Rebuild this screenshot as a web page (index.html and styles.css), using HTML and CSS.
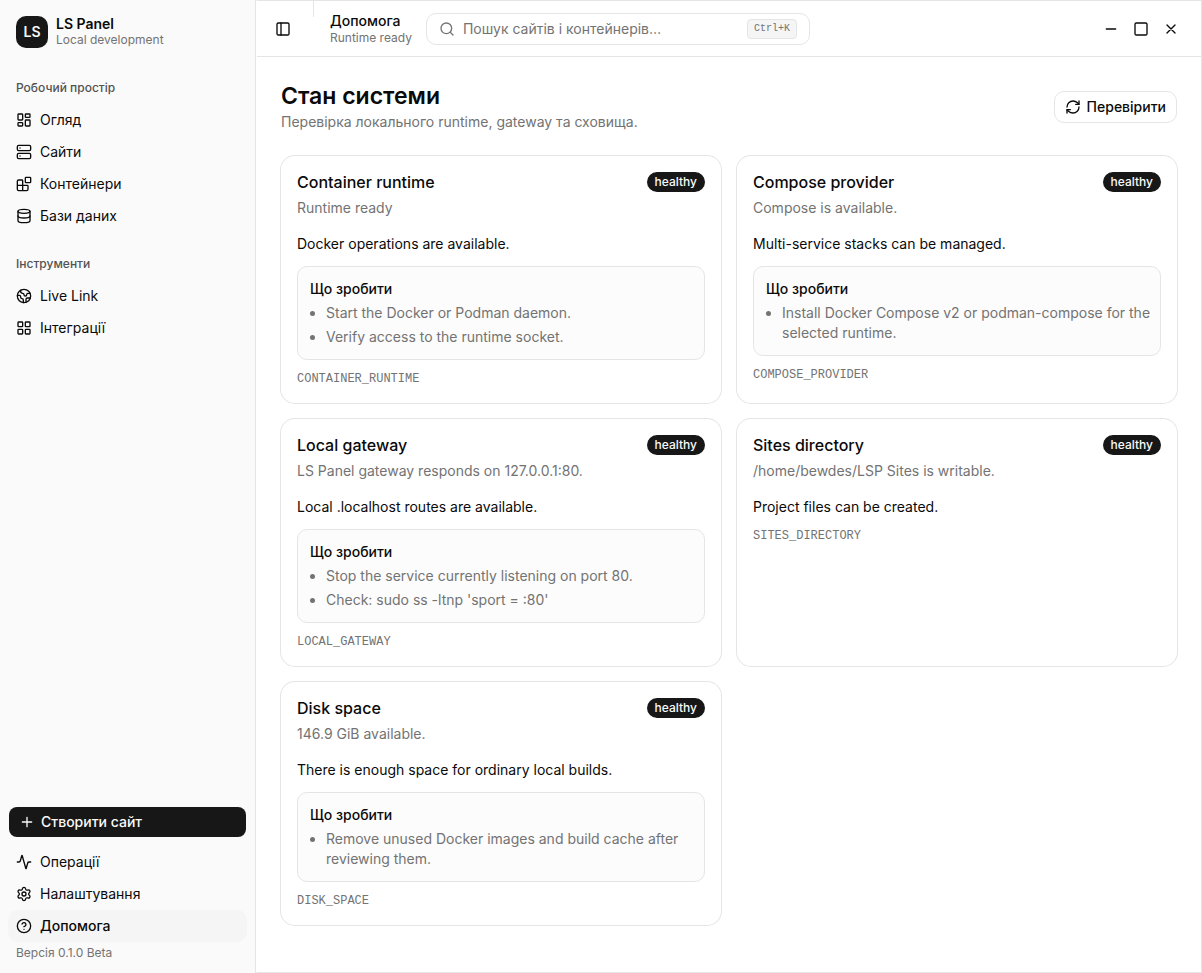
FILE: index.html
```
<!DOCTYPE html>
<html lang="uk">
<head>
    <meta charset="UTF-8">
    <meta name="viewport" content="width=device-width, initial-scale=1.0">
    <title>LS Panel</title>
    <link rel="stylesheet" href="styles.css">
</head>
<body>
    <div class="app">
        <aside class="sidebar">
            <div class="brand">
                <div class="brand-logo">LS</div>
                <div class="brand-text">
                    <div class="brand-name">LS Panel</div>
                    <div class="brand-sub">Local development</div>
                </div>
            </div>

            <nav class="nav-group">
                <h2 class="nav-label">Робочий простір</h2>
                <a class="nav-item" href="#">
                    <svg class="icon" viewBox="0 0 24 24"><rect x="3" y="3" width="7" height="9" rx="1"/><rect x="14" y="3" width="7" height="5" rx="1"/><rect x="14" y="12" width="7" height="9" rx="1"/><rect x="3" y="16" width="7" height="5" rx="1"/></svg>
                    Огляд
                </a>
                <a class="nav-item" href="#">
                    <svg class="icon" viewBox="0 0 24 24"><rect x="2" y="2" width="20" height="8" rx="2"/><rect x="2" y="14" width="20" height="8" rx="2"/><path d="M6 6h.01M6 18h.01"/></svg>
                    Сайти
                </a>
                <a class="nav-item" href="#">
                    <svg class="icon" viewBox="0 0 24 24"><path d="M10 22V7a1 1 0 0 0-1-1H4a2 2 0 0 0-2 2v12a2 2 0 0 0 2 2h12a2 2 0 0 0 2-2v-5a1 1 0 0 0-1-1H2"/><rect x="14" y="2" width="8" height="8" rx="1"/></svg>
                    Контейнери
                </a>
                <a class="nav-item" href="#">
                    <svg class="icon" viewBox="0 0 24 24"><ellipse cx="12" cy="5" rx="9" ry="3"/><path d="M3 5v14a9 3 0 0 0 18 0V5"/><path d="M3 12a9 3 0 0 0 18 0"/></svg>
                    Бази даних
                </a>
            </nav>

            <nav class="nav-group">
                <h2 class="nav-label">Інструменти</h2>
                <a class="nav-item" href="#">
                    <svg class="icon" viewBox="0 0 24 24"><path d="M21.54 15H17a2 2 0 0 0-2 2v4.54"/><path d="M7 3.34V5a3 3 0 0 0 3 3a2 2 0 0 1 2 2c0 1.1.9 2 2 2a2 2 0 0 0 2-2c0-1.1.9-2 2-2h3.17"/><path d="M11 21.95V18a2 2 0 0 0-2-2a2 2 0 0 1-2-2v-1a2 2 0 0 0-2-2H2.05"/><circle cx="12" cy="12" r="10"/></svg>
                    Live Link
                </a>
                <a class="nav-item" href="#">
                    <svg class="icon" viewBox="0 0 24 24"><rect x="3" y="3" width="7" height="7" rx="1"/><rect x="14" y="3" width="7" height="7" rx="1"/><rect x="14" y="14" width="7" height="7" rx="1"/><rect x="3" y="14" width="7" height="7" rx="1"/></svg>
                    Інтеграції
                </a>
            </nav>

            <div class="sidebar-footer">
                <button class="create-btn" type="button">
                    <svg class="icon" viewBox="0 0 24 24"><path d="M5 12h14M12 5v14"/></svg>
                    Створити сайт
                </button>
                <a class="nav-item" href="#">
                    <svg class="icon" viewBox="0 0 24 24"><path d="M22 12h-2.48a2 2 0 0 0-1.93 1.46l-2.35 8.36a.25.25 0 0 1-.48 0L9.24 2.18a.25.25 0 0 0-.48 0l-2.35 8.36A2 2 0 0 1 4.49 12H2"/></svg>
                    Операції
                </a>
                <a class="nav-item" href="#">
                    <svg class="icon" viewBox="0 0 24 24"><path d="M9.671 4.136a2.34 2.34 0 0 1 4.659 0 2.34 2.34 0 0 0 3.319 1.915 2.34 2.34 0 0 1 2.33 4.033 2.34 2.34 0 0 0 0 3.831 2.34 2.34 0 0 1-2.33 4.033 2.34 2.34 0 0 0-3.319 1.915 2.34 2.34 0 0 1-4.659 0 2.34 2.34 0 0 0-3.32-1.915 2.34 2.34 0 0 1-2.33-4.033 2.34 2.34 0 0 0 0-3.831A2.34 2.34 0 0 1 6.35 6.051a2.34 2.34 0 0 0 3.319-1.915"/><circle cx="12" cy="12" r="3"/></svg>
                    Налаштування
                </a>
                <a class="nav-item active" href="#">
                    <svg class="icon" viewBox="0 0 24 24"><circle cx="12" cy="12" r="10"/><path d="M9.09 9a3 3 0 0 1 5.83 1c0 2-3 3-3 3"/><path d="M12 17h.01"/></svg>
                    Допомога
                </a>
                <p class="version">Версія 0.1.0 Beta</p>
            </div>
        </aside>

        <div class="main">
            <header class="topbar">
                <button class="icon-btn" type="button" aria-label="Бічна панель">
                    <svg class="icon" viewBox="0 0 24 24"><rect x="3" y="3" width="18" height="18" rx="2"/><path d="M9 3v18"/></svg>
                </button>
                <div class="separator"></div>
                <div class="page-info">
                    <div class="page-name">Допомога</div>
                    <div class="page-status">Runtime ready</div>
                </div>
                <label class="search">
                    <svg class="icon" viewBox="0 0 24 24"><circle cx="11" cy="11" r="8"/><path d="m21 21-4.34-4.34"/></svg>
                    <input type="text" placeholder="Пошук сайтів і контейнерів…" aria-label="Пошук">
                    <kbd>Ctrl+K</kbd>
                </label>
                <div class="window-controls">
                    <button class="icon-btn" type="button" aria-label="Згорнути">
                        <svg class="icon" viewBox="0 0 24 24"><path d="M5 12h14"/></svg>
                    </button>
                    <button class="icon-btn" type="button" aria-label="Розгорнути">
                        <svg class="icon" viewBox="0 0 24 24"><rect x="3" y="3" width="18" height="18" rx="2"/></svg>
                    </button>
                    <button class="icon-btn" type="button" aria-label="Закрити">
                        <svg class="icon" viewBox="0 0 24 24"><path d="M18 6 6 18M6 6l12 12"/></svg>
                    </button>
                </div>
            </header>

            <main class="content">
                <div class="page-header">
                    <div>
                        <h1>Стан системи</h1>
                        <p class="muted">Перевірка локального runtime, gateway та сховища.</p>
                    </div>
                    <button class="check-btn" type="button">
                        <svg class="icon" viewBox="0 0 24 24"><path d="M3 12a9 9 0 0 1 9-9 9.75 9.75 0 0 1 6.74 2.74L21 8"/><path d="M21 3v5h-5"/><path d="M21 12a9 9 0 0 1-9 9 9.75 9.75 0 0 1-6.74-2.74L3 16"/><path d="M8 16H3v5"/></svg>
                        Перевірити
                    </button>
                </div>

                <div class="cards">
                    <section class="card">
                        <div class="card-header">
                            <h2>Container runtime</h2>
                            <span class="badge">healthy</span>
                            <p class="muted">Runtime ready</p>
                        </div>
                        <p>Docker operations are available.</p>
                        <div class="hint">
                            <h3>Що зробити</h3>
                            <ul>
                                <li>Start the Docker or Podman daemon.</li>
                                <li>Verify access to the runtime socket.</li>
                            </ul>
                        </div>
                        <code>CONTAINER_RUNTIME</code>
                    </section>

                    <section class="card">
                        <div class="card-header">
                            <h2>Compose provider</h2>
                            <span class="badge">healthy</span>
                            <p class="muted">Compose is available.</p>
                        </div>
                        <p>Multi-service stacks can be managed.</p>
                        <div class="hint">
                            <h3>Що зробити</h3>
                            <ul>
                                <li>Install Docker Compose v2 or podman-compose for the selected runtime.</li>
                            </ul>
                        </div>
                        <code>COMPOSE_PROVIDER</code>
                    </section>

                    <section class="card">
                        <div class="card-header">
                            <h2>Local gateway</h2>
                            <span class="badge">healthy</span>
                            <p class="muted">LS Panel gateway responds on 127.0.0.1:80.</p>
                        </div>
                        <p>Local .localhost routes are available.</p>
                        <div class="hint">
                            <h3>Що зробити</h3>
                            <ul>
                                <li>Stop the service currently listening on port 80.</li>
                                <li>Check: sudo ss -ltnp 'sport = :80'</li>
                            </ul>
                        </div>
                        <code>LOCAL_GATEWAY</code>
                    </section>

                    <section class="card">
                        <div class="card-header">
                            <h2>Sites directory</h2>
                            <span class="badge">healthy</span>
                            <p class="muted">/home/bewdes/LSP Sites is writable.</p>
                        </div>
                        <p>Project files can be created.</p>
                        <code>SITES_DIRECTORY</code>
                    </section>

                    <section class="card">
                        <div class="card-header">
                            <h2>Disk space</h2>
                            <span class="badge">healthy</span>
                            <p class="muted">146.9 GiB available.</p>
                        </div>
                        <p>There is enough space for ordinary local builds.</p>
                        <div class="hint">
                            <h3>Що зробити</h3>
                            <ul>
                                <li>Remove unused Docker images and build cache after reviewing them.</li>
                            </ul>
                        </div>
                        <code>DISK_SPACE</code>
                    </section>
                </div>
            </main>
        </div>
    </div>
</body>
</html>
```
FILE: styles.css
```
* {
    margin: 0;
    padding: 0;
    box-sizing: border-box;
}

body {
    font-family: Inter, "Liberation Sans", sans-serif;
    font-size: 14px;
    line-height: 20px;
    color: #0a0a0a;
    background: #fff;
}

button,
input {
    font: inherit;
    color: inherit;
}

button {
    cursor: pointer;
}

.icon {
    width: 16px;
    height: 16px;
    flex-shrink: 0;
    fill: none;
    stroke: currentColor;
    stroke-width: 2;
    stroke-linecap: round;
    stroke-linejoin: round;
}

.muted {
    color: #737373;
}

.app {
    display: flex;
    min-height: 100vh;
}

/* Sidebar */
.sidebar {
    display: flex;
    flex-direction: column;
    width: 256px;
    flex-shrink: 0;
    padding: 8px;
    background: #fafafa;
    border-right: 1px solid #e5e5e5;
}

.brand {
    display: flex;
    align-items: center;
    gap: 8px;
    padding: 8px;
    margin-bottom: 16px;
}

.brand-logo {
    display: flex;
    align-items: center;
    justify-content: center;
    width: 32px;
    height: 32px;
    border-radius: 10px;
    background: #171717;
    color: #fafafa;
    font-weight: 600;
}

.brand-text {
    line-height: 16px;
}

.brand-name {
    font-weight: 600;
}

.brand-sub {
    font-size: 12px;
    color: #737373;
}

.nav-group {
    margin-bottom: 16px;
}

.nav-label {
    padding: 0 8px;
    font-size: 12px;
    font-weight: 500;
    line-height: 32px;
    color: #525252;
}

.nav-item {
    display: flex;
    align-items: center;
    gap: 8px;
    height: 32px;
    padding: 0 8px;
    border-radius: 10px;
    color: inherit;
    text-decoration: none;
}

.nav-item.active {
    background: #f5f5f5;
    font-weight: 500;
}

.sidebar-footer {
    display: flex;
    flex-direction: column;
    margin-top: auto;
}

.create-btn {
    display: flex;
    align-items: center;
    gap: 6px;
    height: 30px;
    margin: 0 1px 9px;
    padding: 0 10px;
    border: none;
    border-radius: 8px;
    background: #171717;
    color: #fafafa;
    font-weight: 500;
}

.version {
    padding: 3px 8px 4px;
    font-size: 12px;
    line-height: 16px;
    color: #737373;
}

/* Top bar */
.main {
    flex: 1;
    min-width: 0;
    border: 1px solid #e5e5e5;
    border-left-color: #fff;
}

.topbar {
    display: flex;
    align-items: center;
    height: 56px;
    padding: 0 16px 0 12px;
    border-bottom: 1px solid #e5e5e5;
}

.icon-btn {
    display: flex;
    align-items: center;
    justify-content: center;
    width: 28px;
    height: 28px;
    border: none;
    border-radius: 8px;
    background: none;
}

.separator {
    align-self: flex-start;
    width: 1px;
    height: 16px;
    margin: 0 16px;
    background: #e5e5e5;
}

.page-info {
    margin-right: 14px;
    line-height: 17px;
    white-space: nowrap;
}

.page-name {
    font-weight: 500;
}

.page-status {
    font-size: 12px;
    color: #737373;
}

.search {
    display: flex;
    align-items: center;
    gap: 8px;
    flex: 0 1 384px;
    height: 32px;
    padding: 0 12px;
    border: 1px solid #e5e5e5;
    border-radius: 10px;
    color: #737373;
}

.search input {
    flex: 1;
    min-width: 0;
    border: none;
    outline: none;
    background: none;
}

.search input::placeholder {
    color: #737373;
    opacity: 1;
}

.search kbd {
    padding: 0 6px;
    border: 1px solid #e5e5e5;
    border-radius: 4px;
    background: #f5f5f5;
    font-family: "Liberation Mono", monospace;
    font-size: 10px;
    line-height: 18px;
}

.window-controls {
    display: flex;
    gap: 2px;
    margin-left: auto;
}

/* Content */
.content {
    padding: 24px;
}

.page-header {
    display: flex;
    align-items: center;
    justify-content: space-between;
    margin-bottom: 24px;
}

h1 {
    font-size: 23px;
    font-weight: 600;
    line-height: 31px;
}

.check-btn {
    display: flex;
    align-items: center;
    gap: 6px;
    height: 32px;
    padding: 0 10px;
    border: 1px solid #e5e5e5;
    border-radius: 10px;
    background: #fff;
    font-weight: 500;
}

.cards {
    display: grid;
    grid-template-columns: 1fr 1fr;
    gap: 16px;
}

.card {
    display: flex;
    flex-direction: column;
    gap: 12px;
    padding: 16px;
    border-radius: 14px;
    box-shadow: 0 0 0 1px #e5e5e5;
}

.card-header {
    display: grid;
    grid-template-columns: 1fr auto;
    gap: 6px;
    margin-bottom: 4px;
}

.card h2 {
    font-size: 16px;
    font-weight: 500;
    line-height: 20px;
}

.badge {
    height: 20px;
    padding: 0 8px;
    border-radius: 10px;
    background: #171717;
    color: #fafafa;
    font-size: 12px;
    font-weight: 500;
}

.hint {
    padding: 12px 4px 12px 12px;
    border: 1px solid #e5e5e5;
    border-radius: 10px;
    background: #fcfcfc;
}

.hint h3 {
    margin-bottom: 4px;
    font-size: 14px;
    font-weight: 500;
}

.hint ul {
    display: grid;
    gap: 4px;
    padding-left: 16px;
    color: #737373;
}

.card code {
    font-family: "Liberation Mono", monospace;
    font-size: 12px;
    line-height: 15px;
    color: #737373;
}
```
